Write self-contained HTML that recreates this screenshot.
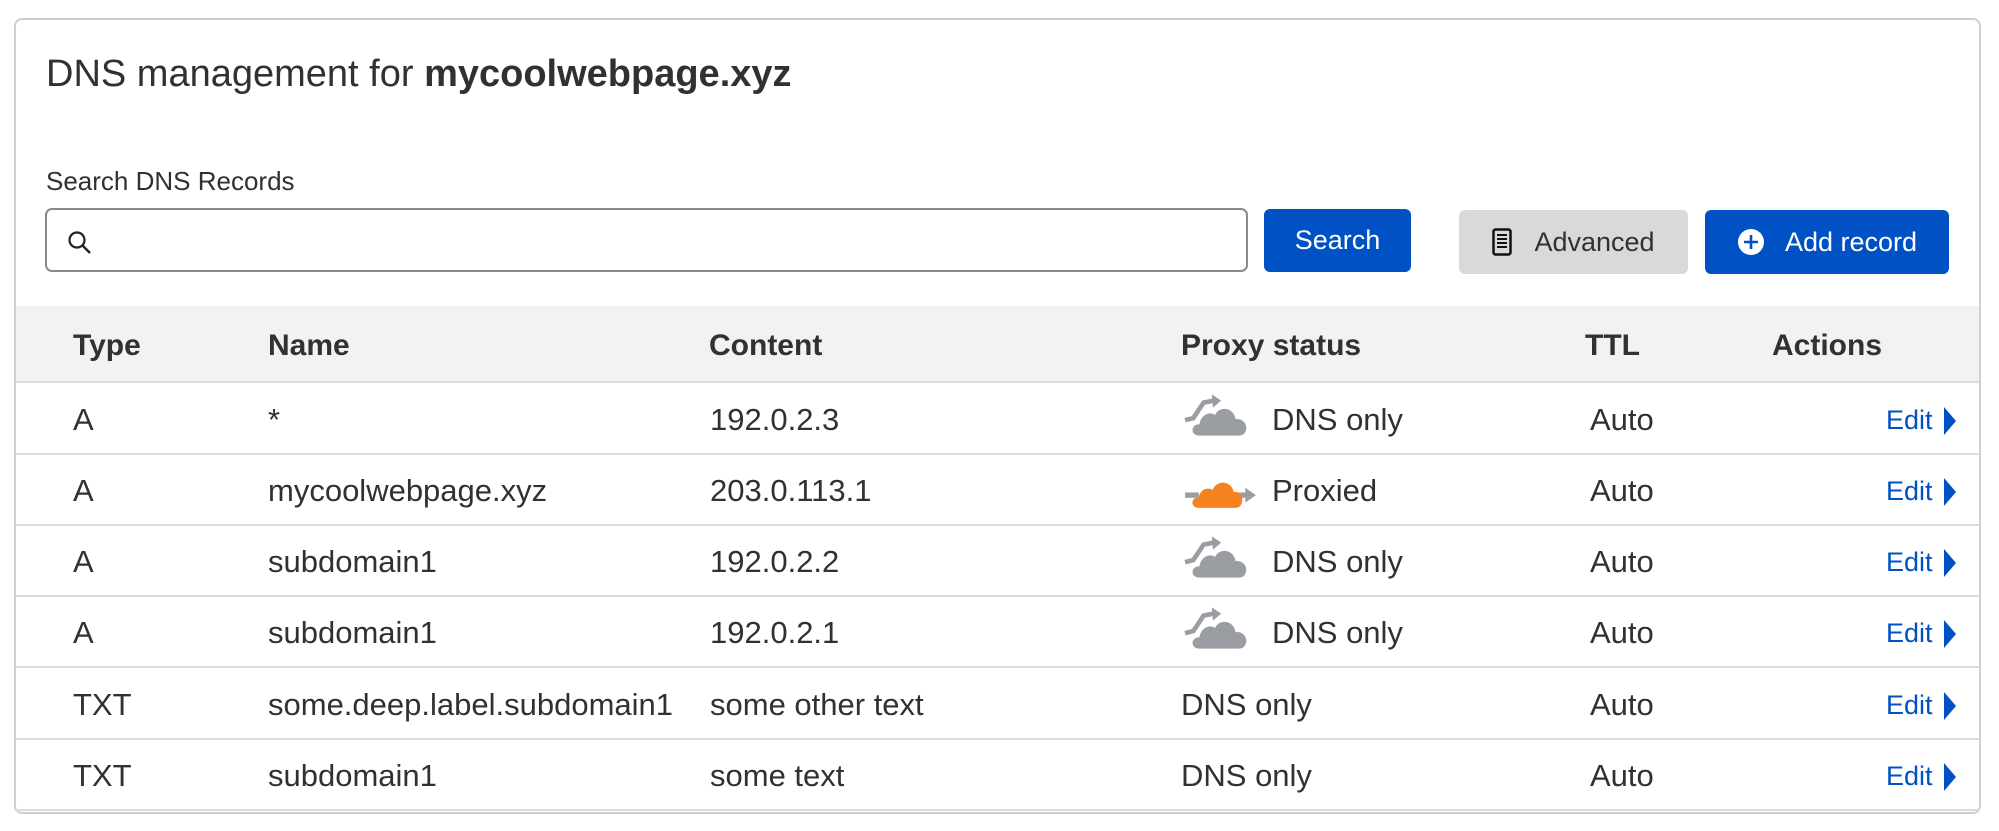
<!DOCTYPE html>
<html><head><meta charset="utf-8"><style>
*{box-sizing:border-box;margin:0;padding:0}
body{width:1999px;height:831px;background:#fff;font-family:"Liberation Sans",Arial,sans-serif;color:#313131;position:relative;overflow:hidden}
.card{position:absolute;left:14px;top:18px;width:1967px;height:796px;border:2px solid #cfcfcf;border-radius:8px;background:#fff}
.abs{position:absolute}
h1{position:absolute;left:46px;top:53px;font-size:38px;font-weight:400;color:#313131;white-space:nowrap}
h1 b{font-weight:700}
.lbl{position:absolute;left:46px;top:166px;font-size:26px}
.input{position:absolute;left:45px;top:208px;width:1203px;height:64px;border:2px solid #8a8a8a;border-radius:7px}
.btn{position:absolute;border-radius:6px;font-size:27px;display:flex;align-items:center;justify-content:center;color:#fff;background:#0051c3}
.hdr{position:absolute;left:16px;top:306px;width:1963px;height:77px;background:#f2f2f2;border-bottom:2px solid #dcdcdc}
.th{position:absolute;top:329px;font-size:30px;font-weight:700;color:#313131}
.row{position:absolute;left:16px;width:1963px;height:72px;border-bottom:2px solid #dcdcdc}
.td{position:absolute;font-size:31px;color:#313131;white-space:nowrap}
.edit{position:absolute;font-size:27px;color:#0051c3}
</style></head><body>
<div class="card"></div>
<h1>DNS management for <b>mycoolwebpage.xyz</b></h1>
<div class="lbl">Search DNS Records</div>
<div class="input"><svg class="abs" style="left:20px;top:20px" width="26" height="26" viewBox="0 0 26 26"><circle cx="10" cy="10" r="7.5" fill="none" stroke="#222" stroke-width="2.2"/><line x1="15.5" y1="15.5" x2="23" y2="23" stroke="#222" stroke-width="2.4"/></svg></div>
<div class="btn" style="left:1264px;top:209px;width:147px;height:63px">Search</div>
<div class="btn" style="left:1459px;top:210px;width:229px;height:64px;background:#d9d9d9;color:#313131"><svg width="20" height="28" viewBox="0 0 20 28" style="margin-right:22px"><rect x="1.5" y="1.5" width="17" height="25" rx="2" fill="none" stroke="#111" stroke-width="2.5"/><path d="M5 7h10M5 11h10M5 15h10M5 19h10" stroke="#111" stroke-width="2"/></svg>Advanced</div>
<div class="btn" style="left:1705px;top:210px;width:244px;height:64px"><svg width="28" height="28" viewBox="0 0 28 28" style="margin-right:20px"><circle cx="14" cy="14" r="13" fill="#fff"/><path d="M14 7v14M7 14h14" stroke="#0051c3" stroke-width="2.6"/></svg>Add record</div>
<div class="hdr"></div>
<div class="th" style="left:73px">Type</div>
<div class="th" style="left:268px">Name</div>
<div class="th" style="left:709px">Content</div>
<div class="th" style="left:1181px">Proxy status</div>
<div class="th" style="left:1585px">TTL</div>
<div class="th" style="left:1772px">Actions</div>

<svg width="0" height="0" style="position:absolute"><defs>
<symbol id="gc" viewBox="0 0 64 42"><path d="M2 26 L10 24 L20 9 L30 7" fill="none" stroke="#9a9ea3" stroke-width="4.5"/><path d="M28 1 L37 7 L29 14z" fill="#9a9ea3"/><path d="M16 41 C7 41 7 30 16 30 C17 21 26 17 31 21 C35 12 49 13 51 25 C59 24 64 32 60 38 C59 40 57 41 54 41 Z" fill="#9a9ea3"/></symbol>
<symbol id="oc" viewBox="0 0 70 32"><path d="M1 19 H14 M48 19 H60" stroke="#9a9ea3" stroke-width="5"/><path d="M58 12 L68 19 L58 26z" fill="#9a9ea3"/><path d="M14 31 C6 31 6 21 14 21 C15 14 22 11 27 14 C31 4 45 5 47 16 C54 15 57 22 54 28 C53 30 51 31 49 31 Z" fill="#f6821f"/></symbol>
</defs></svg>

<div class="row" style="top:383px"></div>
<div class="row" style="top:454px"></div>
<div class="row" style="top:525px"></div>
<div class="row" style="top:596px"></div>
<div class="row" style="top:668px"></div>
<div class="row" style="top:739px"></div>

<div class="td" style="left:73px;top:402px">A</div><div class="td" style="left:268px;top:402px">*</div><div class="td" style="left:710px;top:402px">192.0.2.3</div>
<svg class="abs" style="left:1183px;top:393px" width="66" height="44"><use href="#gc"/></svg><div class="td" style="left:1272px;top:402px">DNS only</div><div class="td" style="left:1590px;top:402px">Auto</div>

<div class="td" style="left:73px;top:473px">A</div><div class="td" style="left:268px;top:473px">mycoolwebpage.xyz</div><div class="td" style="left:710px;top:473px">203.0.113.1</div>
<svg class="abs" style="left:1184px;top:475px" width="74" height="34"><use href="#oc"/></svg><div class="td" style="left:1272px;top:473px">Proxied</div><div class="td" style="left:1590px;top:473px">Auto</div>

<div class="td" style="left:73px;top:544px">A</div><div class="td" style="left:268px;top:544px">subdomain1</div><div class="td" style="left:710px;top:544px">192.0.2.2</div>
<svg class="abs" style="left:1183px;top:535px" width="66" height="44"><use href="#gc"/></svg><div class="td" style="left:1272px;top:544px">DNS only</div><div class="td" style="left:1590px;top:544px">Auto</div>

<div class="td" style="left:73px;top:615px">A</div><div class="td" style="left:268px;top:615px">subdomain1</div><div class="td" style="left:710px;top:615px">192.0.2.1</div>
<svg class="abs" style="left:1183px;top:606px" width="66" height="44"><use href="#gc"/></svg><div class="td" style="left:1272px;top:615px">DNS only</div><div class="td" style="left:1590px;top:615px">Auto</div>

<div class="td" style="left:73px;top:687px">TXT</div><div class="td" style="left:268px;top:687px">some.deep.label.subdomain1</div><div class="td" style="left:710px;top:687px">some other text</div><div class="td" style="left:1181px;top:687px">DNS only</div><div class="td" style="left:1590px;top:687px">Auto</div>

<div class="td" style="left:73px;top:758px">TXT</div><div class="td" style="left:268px;top:758px">subdomain1</div><div class="td" style="left:710px;top:758px">some text</div><div class="td" style="left:1181px;top:758px">DNS only</div><div class="td" style="left:1590px;top:758px">Auto</div>

<div class="edit" style="left:1886px;top:405px">Edit</div><svg class="abs" style="left:1943px;top:406px" width="14" height="30"><path d="M1 1 L13 15 L1 29z" fill="#0051c3"/></svg>
<div class="edit" style="left:1886px;top:476px">Edit</div><svg class="abs" style="left:1943px;top:477px" width="14" height="30"><path d="M1 1 L13 15 L1 29z" fill="#0051c3"/></svg>
<div class="edit" style="left:1886px;top:547px">Edit</div><svg class="abs" style="left:1943px;top:548px" width="14" height="30"><path d="M1 1 L13 15 L1 29z" fill="#0051c3"/></svg>
<div class="edit" style="left:1886px;top:618px">Edit</div><svg class="abs" style="left:1943px;top:619px" width="14" height="30"><path d="M1 1 L13 15 L1 29z" fill="#0051c3"/></svg>
<div class="edit" style="left:1886px;top:690px">Edit</div><svg class="abs" style="left:1943px;top:691px" width="14" height="30"><path d="M1 1 L13 15 L1 29z" fill="#0051c3"/></svg>
<div class="edit" style="left:1886px;top:761px">Edit</div><svg class="abs" style="left:1943px;top:762px" width="14" height="30"><path d="M1 1 L13 15 L1 29z" fill="#0051c3"/></svg>
</body></html>
